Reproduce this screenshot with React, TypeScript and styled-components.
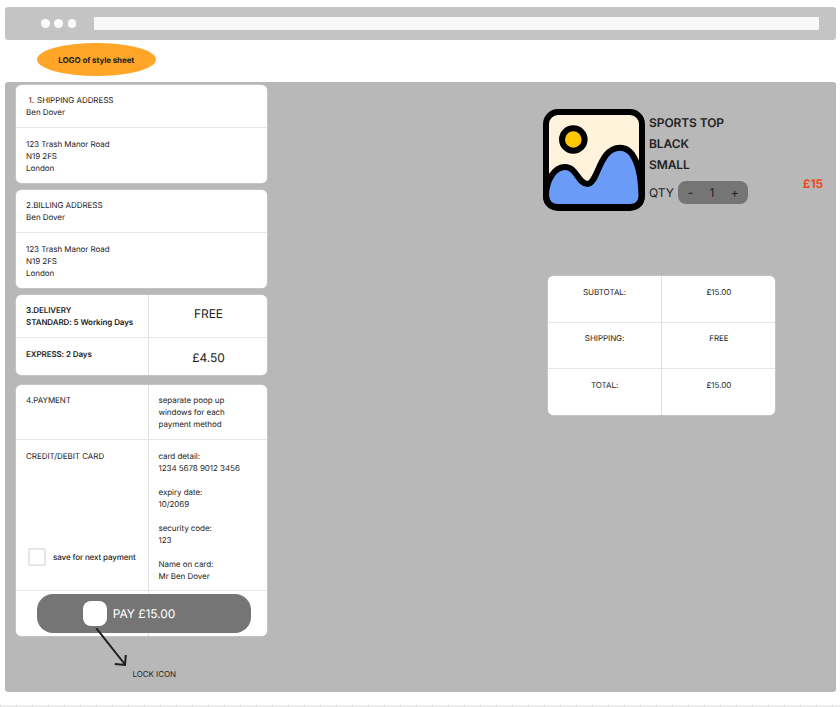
import React from "react";
import styled, { createGlobalStyle } from "styled-components";

const GlobalStyle = createGlobalStyle`
  * { box-sizing: border-box; }
  body { margin: 0; background: #fff; overflow: hidden; }
`;

const Page = styled.div`
  width: 840px;
  height: 707px;
  overflow: hidden;
  padding-top: 7px;
  display: flex;
  flex-direction: column;
  background: #fff;
  font-family: Inter, sans-serif;
  font-size: 8px;
  line-height: 12px;
  letter-spacing: -0.05px;
  color: #222;
  text-rendering: geometricPrecision;
`;

const BrowserBar = styled.div`
  flex: none;
  height: 32.7px;
  margin: 0 4.5px 0 5.3px;
  padding: 0 17px 0 36px;
  display: flex;
  align-items: center;
  border-radius: 3px;
  background: #c4c4c4;
`;

const Dots = styled.div`
  display: flex;
  gap: 4.8px;
  margin-right: 18px;
`;

const Dot = styled.span`
  width: 8.4px;
  height: 8.4px;
  border-radius: 50%;
  background: #fafafa;
`;

const AddressField = styled.div`
  flex: 1;
  height: 12.4px;
  border-radius: 1px;
  background: #f8f8f8;
`;

const Header = styled.header`
  flex: none;
  height: 42.8px;
  padding: 3.3px 0 0 36.5px;
`;

const Logo = styled.div`
  width: 119.5px;
  height: 33px;
  padding-top: 1px;
  display: flex;
  align-items: center;
  justify-content: center;
  border-radius: 50%;
  background: #ffa629;
  font-weight: 700;
  letter-spacing: -0.1px;
`;

const Board = styled.main`
  flex: none;
  height: 609.7px;
  margin: 0 3.7px 0 5.3px;
  display: flex;
  align-items: flex-start;
  border-radius: 3px;
  background: #b8b8b8;
`;

const Forms = styled.div`
  width: 251px;
  margin: 2.5px 0 0 11.2px;
`;

const Card = styled.section<{ $gap?: number }>`
  margin-bottom: ${(p) => p.$gap ?? 0}px;
  border-radius: 5.5px;
  overflow: hidden;
  background: #fff;
  box-shadow: 0 0 0 0.5px rgba(255, 255, 255, 0.35);
`;

const Row = styled.div<{ $h: number; $columns?: string }>`
  height: ${(p) => p.$h}px;
  display: grid;
  grid-template-columns: ${(p) => p.$columns ?? "1fr"};
  & + & { border-top: 1px solid #e6e6e6; }
`;

const Cell = styled.div<{ $top?: number; $bold?: boolean }>`
  padding: ${(p) => p.$top ?? 9.6}px 0 0 9.6px;
  white-space: pre-line;
  font-weight: ${(p) => (p.$bold ? 600 : 400)};
  letter-spacing: ${(p) => (p.$bold ? "-0.1px" : "inherit")};
  & + & { border-left: 1px solid #e0e0e0; padding-left: 9px; }
`;

const PriceCell = styled.div<{ $top?: number }>`
  padding-top: ${(p) => p.$top ?? 10.2}px;
  border-left: 1px solid #e0e0e0;
  text-align: center;
  font-size: 12px;
  line-height: 18px;
`;

const ListNumber = styled.span`
  margin: 0 3px 0 2.5px;
`;

const CardChoice = styled(Cell)`
  display: flex;
  flex-direction: column;
  justify-content: space-between;
  padding-bottom: 24px;
`;

const SaveOption = styled.label`
  display: flex;
  align-items: center;
  gap: 7px;
  margin-left: 2px;
  font-weight: 500;
  letter-spacing: -0.12px;
`;

const CheckBox = styled.span`
  width: 18px;
  height: 18px;
  border-radius: 2px;
  box-shadow: inset 0 0 0 1.8px #e3e3e3;
`;

const PayArea = styled.div`
  height: 45.5px;
  padding: 2.6px 0 0 20.2px;
  border-top: 1px solid #e6e6e6;
  background: linear-gradient(#e0e0e0, #e0e0e0) 132px 0 / 1px 100% no-repeat;
`;

const PayButton = styled.button`
  width: 214.7px;
  height: 39.5px;
  padding: 0 0 0 46px;
  display: flex;
  align-items: center;
  gap: 6px;
  border: 0;
  border-radius: 16px;
  background: #757575;
  color: #fff;
  font: 400 12px/18px Inter, sans-serif;
  letter-spacing: -0.05px;
  text-rendering: inherit;
`;

const LockSlot = styled.span`
  width: 24px;
  height: 24.5px;
  border-radius: 8px;
  background: #fff;
`;

const LockNote = styled.div`
  position: relative;
  height: 50px;
  padding: 32.5px 0 0 116px;
`;

const Arrow = styled.svg`
  position: absolute;
  left: 76px;
  top: -11px;
`;

const Order = styled.div`
  flex: 1;
  margin: 26.6px 13.2px 0 275.2px;
`;

const Product = styled.div`
  height: 102px;
  display: flex;
`;

const Picture = styled.svg`
  flex: none;
  width: 102px;
  height: 102px;
`;

const Details = styled.div`
  flex: 1;
  padding: 2.7px 0 0 4.4px;
  font-size: 12px;
  font-weight: 600;
  line-height: 21px;
  letter-spacing: -0.1px;
`;

const QuantityRow = styled.div`
  display: flex;
  align-items: center;
  gap: 4.5px;
  height: 24px;
  margin-top: 5.5px;
  font-weight: 400;
`;

const Stepper = styled.div`
  width: 70px;
  height: 23.5px;
  padding: 0 9.5px;
  display: flex;
  align-items: center;
  justify-content: space-between;
  border-radius: 8px;
  background: #757575;
`;

const Price = styled.div`
  padding-top: 63.7px;
  color: #f24822;
  font-size: 12px;
  font-weight: 700;
  line-height: 21px;
`;

const Totals = styled(Card)`
  width: 227.6px;
  margin: 65.3px 0 0 5px;
`;

const TotalCell = styled.div`
  padding-top: 9.3px;
  text-align: center;
  & + & { border-left: 1px solid #e0e0e0; }
`;

const SheetEdge = styled.div`
  flex: none;
  height: 2px;
  margin-top: 12.6px;
  background: repeating-linear-gradient(90deg, #dedede 0 1px, #ececec 1px 16px);
`;

const address = "123 Trash Manor Road\nN19 2FS\nLondon";
const split = "132px 1fr";

const totals = [
  { label: "SUBTOTAL:", value: "£15.00", height: 45.3 },
  { label: "SHIPPING:", value: "FREE", height: 46.7 },
  { label: "TOTAL:", value: "£15.00", height: 46.7 },
];

export default function App() {
  return (
    <Page>
      <GlobalStyle />
      <BrowserBar>
        <Dots><Dot /><Dot /><Dot /></Dots>
        <AddressField />
      </BrowserBar>
      <Header><Logo>LOGO of style sheet</Logo></Header>
      <Board>
        <Forms>
          <Card $gap={6.5}>
            <Row $h={42.5}><Cell $top={9.1}><ListNumber>1.</ListNumber>SHIPPING ADDRESS{"\n"}Ben Dover</Cell></Row>
            <Row $h={56}><Cell>{address}</Cell></Row>
          </Card>
          <Card $gap={6.2}>
            <Row $h={42.5}><Cell $top={9.1}>{"2.BILLING ADDRESS\nBen Dover"}</Cell></Row>
            <Row $h={56}><Cell>{address}</Cell></Row>
          </Card>
          <Card $gap={9.2}>
            <Row $h={42.5} $columns={split}>
              <Cell $bold $top={9.4}>{"3.DELIVERY\nSTANDARD: 5 Working Days"}</Cell>
              <PriceCell>FREE</PriceCell>
            </Row>
            <Row $h={38.3} $columns={split}>
              <Cell $bold>EXPRESS: 2 Days</Cell>
              <PriceCell $top={10.6}>£4.50</PriceCell>
            </Row>
          </Card>
          <Card>
            <Row $h={54.5} $columns={split}>
              <Cell>4.PAYMENT</Cell>
              <Cell>{"separate poop up\nwindows for each\npayment method"}</Cell>
            </Row>
            <Row $h={151} $columns={split}>
              <CardChoice $top={10}>
                <span>CREDIT/DEBIT CARD</span>
                <SaveOption><CheckBox />save for next payment</SaveOption>
              </CardChoice>
              <Cell>{"card detail:\n1234 5678 9012 3456\n\nexpiry date:\n10/2069\n\nsecurity code:\n123\n\nName on card:\nMr Ben Dover"}</Cell>
            </Row>
            <PayArea>
              <PayButton><LockSlot />PAY £15.00</PayButton>
            </PayArea>
          </Card>
          <LockNote>
            <Arrow width="40" height="44" viewBox="0 0 40 44" fill="none" stroke="#1e1e1e" strokeWidth="2">
              <path d="M4.4 3.3 33 39.5M22.8 39 33 40 33.8 30" />
            </Arrow>
            LOCK ICON
          </LockNote>
        </Forms>
        <Order>
          <Product>
            <Picture viewBox="0 0 102 102">
              <rect x="3" y="3" width="96" height="96" rx="12" fill="#fff3dc" />
              <path d="M3 86C3.5 70 12 58 22 58C34 58 35 75 44.5 75C55 75 56 38.7 77 38.7C91 38.7 98 58 98.5 87Q98.5 98 87 98H15Q3 98 3 86Z" fill="#699bf7" stroke="#000" strokeWidth="6" />
              <circle cx="30.3" cy="30.5" r="11.3" fill="#ffc700" stroke="#000" strokeWidth="6" />
              <rect x="3" y="3" width="96" height="96" rx="12" fill="none" stroke="#000" strokeWidth="6" />
            </Picture>
            <Details>
              <div>SPORTS TOP</div>
              <div>BLACK</div>
              <div>SMALL</div>
              <QuantityRow>
                QTY
                <Stepper><span>-</span><span>1</span><span>+</span></Stepper>
              </QuantityRow>
            </Details>
            <Price>£15</Price>
          </Product>
          <Totals>
            {totals.map((t) => (
              <Row key={t.label} $h={t.height} $columns="1fr 1fr">
                <TotalCell>{t.label}</TotalCell>
                <TotalCell>{t.value}</TotalCell>
              </Row>
            ))}
          </Totals>
        </Order>
      </Board>
      <SheetEdge />
    </Page>
  );
}
